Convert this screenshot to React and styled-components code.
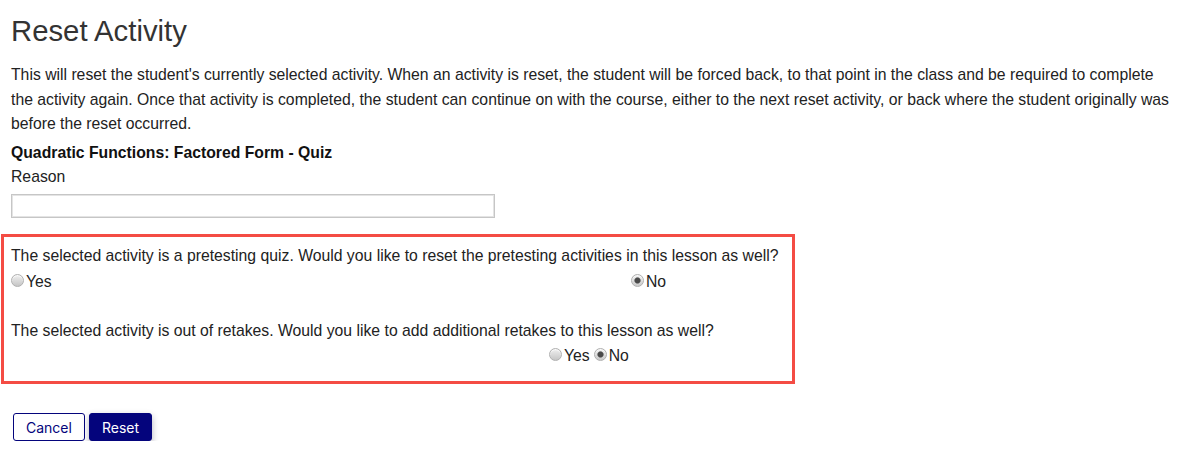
import React, {useState} from 'react';
import styled, {createGlobalStyle, css} from 'styled-components';

const GlobalStyle = createGlobalStyle`
  html, body {
    margin: 0;
    padding: 0;
    background: #fff;
  }
  body {
    font-family: "Liberation Sans", Arial, sans-serif;
    color: #222;
  }
`;

const Page = styled.div`
  padding: 0 0 0 11px;
  font-size: 15.75px;
`;

const Title = styled.h1`
  margin: 14px 0 0;
  font-size: 29.3px;
  line-height: 34px;
  font-weight: 400;
  color: #333;
`;

const Intro = styled.p`
  margin: 15px 0 0;
  line-height: 24.5px;
`;

const ActivityName = styled.div`
  margin-top: 4px;
  line-height: 24.5px;
  font-weight: 700;
  color: #111;
`;

const FieldLabel = styled.label`
  display: block;
  line-height: 24.5px;
`;

const TextInput = styled.input`
  display: block;
  box-sizing: border-box;
  margin-top: 4px;
  width: 484px;
  height: 24.5px;
  border: 1px solid #c6c6c6;
  box-shadow: inset 0 0 0 1px #e4e4e4;
  padding: 2px 4px;
  font: inherit;
  outline: none;
`;

const Notice = styled.div`
  box-sizing: border-box;
  margin: 16px 0 0 -10px;
  width: 794px;
  border: 3px solid #f44c44;
  padding: 7px 7px 13px;
`;

const Question = styled.div`
  line-height: 24.5px;
  margin-top: ${props => props.$gap || 0}px;
`;

const RadioRow = styled.div`
  display: grid;
  grid-template-columns: ${props => props.$columns || 'auto auto'};
  justify-content: start;
  column-gap: 4px;
  margin-top: 1px;
  padding-left: ${props => props.$indent || 0}px;
  line-height: 24px;
`;

const Choice = styled.label`
  display: inline-flex;
  align-items: center;
  cursor: pointer;
`;

const HiddenRadio = styled.input`
  position: absolute;
  opacity: 0;
  pointer-events: none;
`;

const RadioDot = styled.span`
  box-sizing: border-box;
  display: inline-block;
  width: 13px;
  height: 13px;
  margin: -3px 2px 0 0;
  border-radius: 50%;
  border: 1px solid #b0b0b0;
  background: linear-gradient(#efefef, #c6c6c6);
  box-shadow: inset 0 1px 1px rgba(255, 255, 255, 0.8);

  ${props =>
    props.$checked &&
    css`
      background: radial-gradient(circle, #4a4a4a 0 2.5px, #8a8a8a 3px, transparent 3.6px),
        linear-gradient(#f0f0f0, #cacaca);
    `}
`;

const Actions = styled.div`
  display: flex;
  gap: 4px;
  margin: 29px 0 0 2px;
`;

const Button = styled.button`
  box-sizing: border-box;
  height: 28px;
  padding: 0 12px;
  border-radius: 3px;
  border: 1px solid #04047c;
  font-family: Inter, "Liberation Sans", sans-serif;
  font-size: 14px;
  cursor: pointer;
  background: ${props => (props.$primary ? '#04047c' : '#fff')};
  color: ${props => (props.$primary ? '#fff' : '#04047c')};
  box-shadow: ${props => (props.$primary ? '0 3px 7px rgba(0, 0, 40, 0.3)' : 'none')};
`;

const Radio = ({name, value, checked, onPick, children}) => (
  <Choice>
    <HiddenRadio
      type="radio"
      name={name}
      value={value}
      checked={checked}
      onChange={() => onPick(value)}
    />
    <RadioDot $checked={checked} />
    {children}
  </Choice>
);

const App = () => {
  const [pretest, setPretest] = useState('no');
  const [retakes, setRetakes] = useState('no');
  const [reason, setReason] = useState('');

  return (
    <>
      <GlobalStyle />
      <Page>
        <Title>Reset Activity</Title>
        <Intro>
          This will reset the student's currently selected activity. When an activity is reset, the
          student will be forced back, to that point in the class and be required to complete the
          activity again. Once that activity is completed, the student can continue on with the
          course, either to the next reset activity, or back where the student originally was before
          the reset occurred.
        </Intro>
        <ActivityName>Quadratic Functions: Factored Form - Quiz</ActivityName>
        <FieldLabel htmlFor="reason">Reason</FieldLabel>
        <TextInput id="reason" value={reason} onChange={e => setReason(e.target.value)} />

        <Notice>
          <Question>
            The selected activity is a pretesting quiz. Would you like to reset the pretesting
            activities in this lesson as well?
          </Question>
          <RadioRow $columns="616px auto">
            <Radio name="pretest" value="yes" checked={pretest === 'yes'} onPick={setPretest}>
              Yes
            </Radio>
            <Radio name="pretest" value="no" checked={pretest === 'no'} onPick={setPretest}>
              No
            </Radio>
          </RadioRow>

          <Question $gap={25}>
            The selected activity is out of retakes. Would you like to add additional retakes to this
            lesson as well?
          </Question>
          <RadioRow $indent={538}>
            <Radio name="retakes" value="yes" checked={retakes === 'yes'} onPick={setRetakes}>
              Yes
            </Radio>
            <Radio name="retakes" value="no" checked={retakes === 'no'} onPick={setRetakes}>
              No
            </Radio>
          </RadioRow>
        </Notice>

        <Actions>
          <Button>Cancel</Button>
          <Button $primary>Reset</Button>
        </Actions>
      </Page>
    </>
  );
};

export default App;
